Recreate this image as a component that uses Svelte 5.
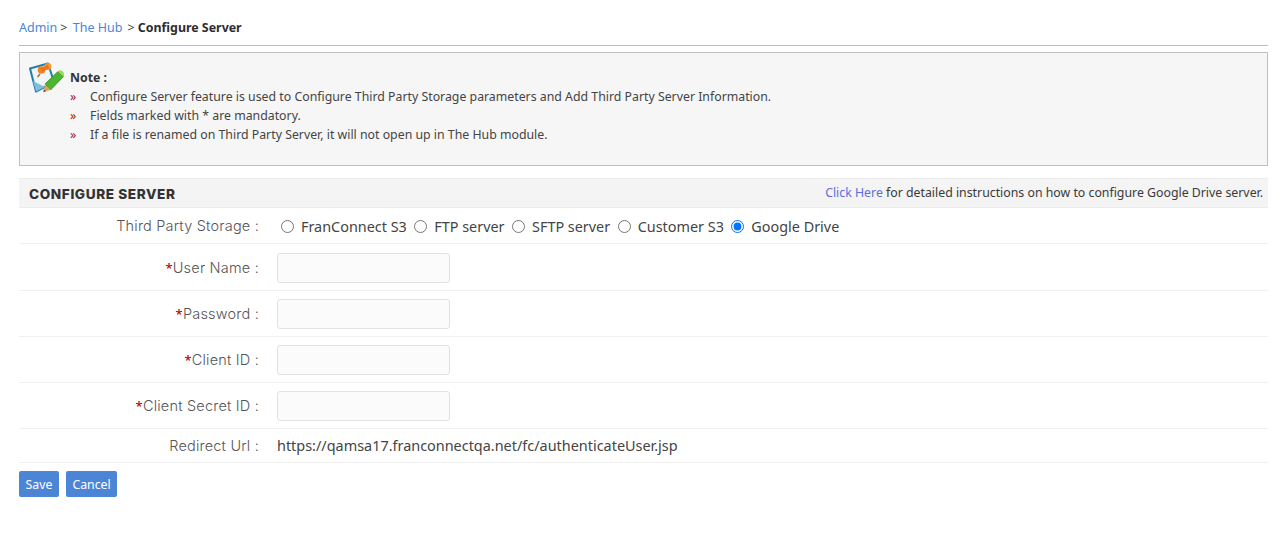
<script>
  let storage = 'gdrive';

  const storageOptions = [
    { id: 'fc', label: 'FranConnect S3' },
    { id: 'ftp', label: 'FTP server' },
    { id: 'sftp', label: 'SFTP server' },
    { id: 'cs3', label: 'Customer S3' },
    { id: 'gdrive', label: 'Google Drive' }
  ];

  const fields = [
    { id: 'user', label: 'User Name', type: 'text' },
    { id: 'pass', label: 'Password', type: 'password' },
    { id: 'client', label: 'Client ID', type: 'text' },
    { id: 'secret', label: 'Client Secret ID', type: 'text' }
  ];

  const notes = [
    'Configure Server feature is used to Configure Third Party Storage parameters and Add Third Party Server Information.',
    'Fields marked with * are mandatory.',
    'If a file is renamed on Third Party Server, it will not open up in The Hub module.'
  ];
</script>

<div class="page">
  <div class="breadcrumb">
    <a href="#admin" class="first">Admin</a><span class="sep">&gt;</span>
    <a href="#hub">The Hub</a><span class="sep">&gt;</span>
    <strong>Configure Server</strong>
  </div>

  <div class="note">
    <svg class="note-icon" width="36" height="32" viewBox="0 0 36 32">
      <path d="M1 6.5 L19 1.5 L25 20 L7 29.5 Z" fill="#eef6fa" stroke="#1f7fa8" stroke-width="2" stroke-linejoin="round"/>
      <path d="M4 19 L7 29.5 L16 25 Z" fill="#7fbfdb"/>
      <path d="M16 22 L29 9.5 L34.5 14.5 L21.5 28 Z" fill="#4cb52e" stroke="#2f8a1e" stroke-width="0.8"/>
      <path d="M29 9.5 L31 8 Q35.5 9 35 13 L34.5 14.5 Z" fill="#9bdc62"/>
      <path d="M16 22 L21.5 28 L14.5 30 Z" fill="#d9a566"/>
      <path d="M14.8 27.5 L14.5 30 L17 29.3 Z" fill="#5a3b1c"/>
      <circle cx="12.5" cy="8" r="3.8" fill="#ee8420"/>
      <circle cx="19" cy="4.5" r="3.4" fill="#f59a32"/>
      <path d="M12.5 8 L19.5 4.5" stroke="#e8791a" stroke-width="4"/>
      <path d="M11 12 L8.5 15" stroke="#b8641c" stroke-width="1.4"/>
    </svg>
    <div class="note-body">
      <div class="note-title">Note :</div>
      <ul>
        {#each notes as n}
          <li><span class="chev">»</span>{n}</li>
        {/each}
      </ul>
    </div>
  </div>

  <div class="section-head">
    <h2>CONFIGURE SERVER</h2>
    <div class="hint"><a href="#help">Click Here</a> for detailed instructions on how to configure Google Drive server.</div>
  </div>

  <form>
    <div class="row storage">
      <div class="label">Third Party Storage :</div>
      <div class="value radios">
        {#each storageOptions as o}
          <label>
            <input type="radio" name="storage" value={o.id} bind:group={storage} />
            <span>{o.label}</span>
          </label>
        {/each}
      </div>
    </div>

    {#each fields as f, i}
      <div class="row field" class:first={i === 0}>
        <div class="label"><span class="req">*</span>{f.label} :</div>
        <div class="value"><input class="text" type={f.type} /></div>
      </div>
    {/each}

    <div class="row redirect">
      <div class="label">Redirect Url :</div>
      <div class="value url">https://qamsa17.franconnectqa.net/fc/authenticateUser.jsp</div>
    </div>

    <div class="actions">
      <button type="button">Save</button>
      <button type="button">Cancel</button>
    </div>
  </form>
</div>

<style>
  :global(body) {
    margin: 0;
    background: #fff;
  }

  .page {
    padding: 19px 17px 0 19px;
    font-family: "Noto Sans", "Open Sans", sans-serif;
    font-size: 12.32px;
    color: #333;
  }

  a {
    color: #4a86d8;
    text-decoration: none;
  }

  .breadcrumb {
    height: 26px;
    line-height: 18px;
    font-size: 12.5px;
    border-bottom: 1px solid #bdbdbd;
  }

  .breadcrumb .sep {
    margin: 0 0 0 5px;
    color: #444;
  }

  .breadcrumb .first + .sep {
    margin: 0 2px 0 3px;
  }

  .breadcrumb strong {
    color: #2d2d2d;
    font-size: 12.4px;
    font-weight: 700;
  }

  .note {
    display: flex;
    margin-top: 6px;
    height: 114px;
    box-sizing: border-box;
    background: #f6f6f6;
    border: 1px solid #bfbfbf;
    padding: 9px 0 0 9px;
  }

  .note-icon {
    flex: none;
  }

  .note-body {
    margin-left: 5px;
    margin-top: 6px;
  }

  .note-title {
    font-weight: 700;
    color: #333;
    line-height: 19px;
  }

  ul {
    list-style: none;
    margin: 0;
    padding: 0;
  }

  li {
    line-height: 19px;
    color: #444;
  }

  .chev {
    display: inline-block;
    width: 20px;
    color: #a31515;
  }

  .section-head {
    display: flex;
    justify-content: space-between;
    align-items: center;
    margin-top: 12px;
    height: 30px;
    box-sizing: border-box;
    background: #f4f4f4;
    border-top: 1px solid #ececec;
    border-bottom: 1px solid #ececec;
    padding: 0 5px 0 10px;
  }

  h2 {
    margin: 2px 0 0;
    font-family: Inter, "Noto Sans", sans-serif;
    font-size: 13.6px;
    font-weight: 800;
    letter-spacing: 0.6px;
    color: #333;
  }

  .hint {
    margin-bottom: 2px;
    color: #3a3a3a;
  }

  .hint a {
    color: #5b6ee0;
  }

  .row {
    display: grid;
    grid-template-columns: 250px 1fr;
    align-items: center;
    box-sizing: border-box;
    border-bottom: 1px solid #f0f0f0;
  }

  .storage {
    height: 36px;
  }

  .field {
    height: 46px;
    padding-top: 1px;
  }

  .field.first {
    height: 47px;
  }

  .redirect {
    height: 34px;
  }

  .label {
    text-align: right;
    padding-right: 10px;
    font-family: Inter, "Noto Sans", sans-serif;
    font-size: 14.5px;
    font-weight: 300;
    letter-spacing: 0.2px;
    color: #555;
  }

  .req {
    font-family: "Noto Sans", sans-serif;
    font-size: 13px;
    font-weight: 500;
    color: #c00000;
  }

  .value {
    padding-left: 8px;
  }

  .radios {
    display: flex;
    font-size: 14.4px;
    color: #444;
    padding-left: 12px;
    padding-top: 1px;
  }

  .radios label {
    display: flex;
    align-items: center;
    margin-right: 7.5px;
  }

  .radios input {
    margin: 0 7px 0 0;
    width: 13px;
    height: 13px;
  }

  .text {
    display: block;
    width: 173px;
    height: 30px;
    box-sizing: border-box;
    background: #fbfbfb;
    border: 1px solid #e2e2e2;
    border-radius: 3px;
  }

  .url {
    font-size: 14.43px;
    color: #444;
  }

  .actions {
    display: flex;
    gap: 7px;
    margin-top: 8px;
  }

  button {
    height: 26px;
    padding: 0 6.5px;
    font-family: "Noto Sans", sans-serif;
    font-size: 12.32px;
    color: #fff;
    background: #4d85d6;
    border: 0;
    border-radius: 2px;
  }
</style>
